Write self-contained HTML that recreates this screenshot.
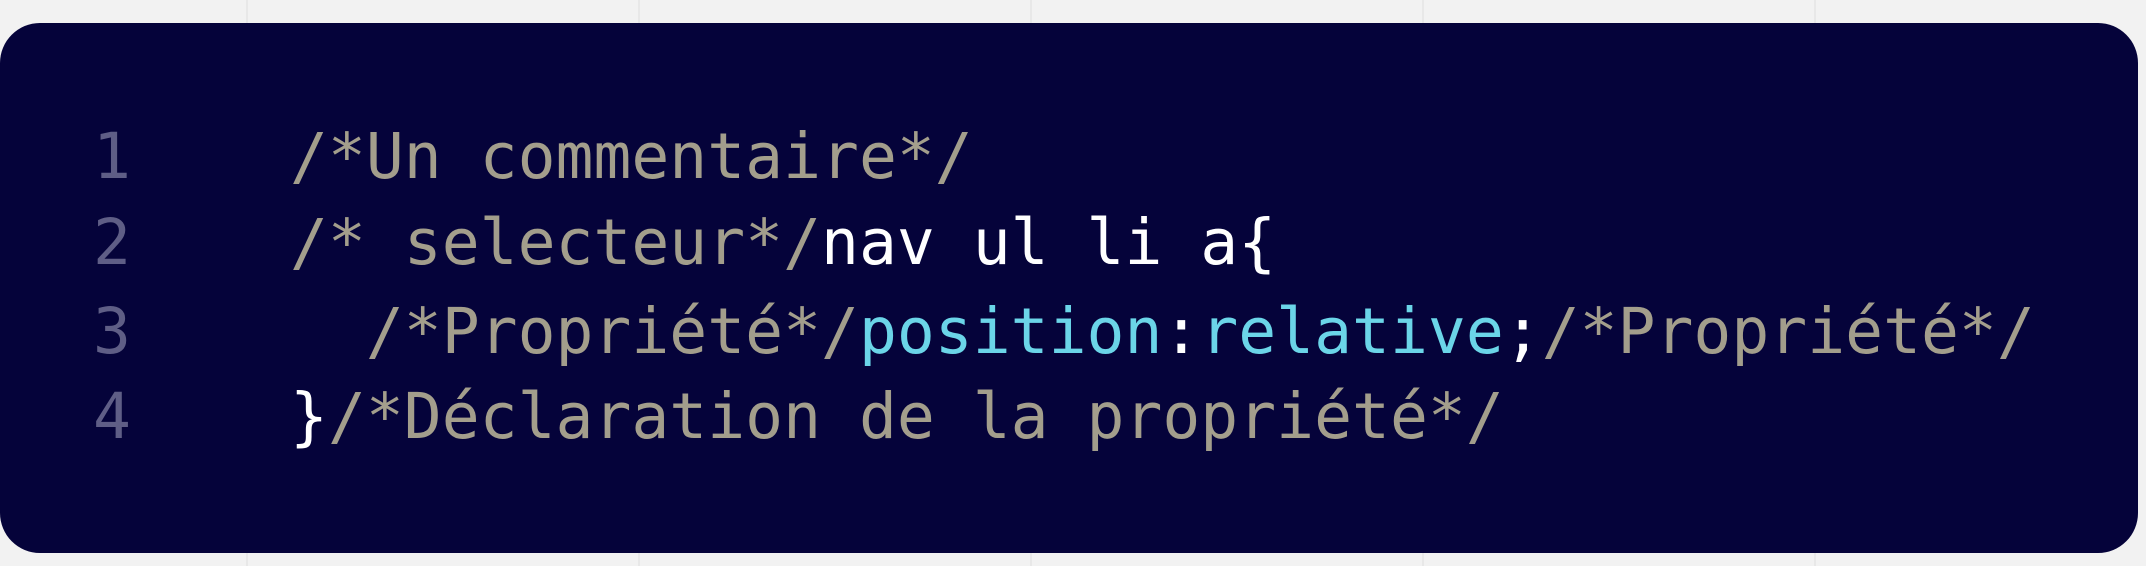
<!DOCTYPE html>
<html><head><meta charset="utf-8"><style>
html,body{margin:0;padding:0;}
body{width:2146px;height:566px;background:#f2f2f2;position:relative;overflow:hidden;
background-image:repeating-linear-gradient(90deg,transparent 0 246px,#e8e8e8 246px 248px,transparent 248px 392px);background-position:0 0;}
.box{position:absolute;left:0;top:23px;width:2138px;height:530px;background:#05033a;border-radius:40px;}
.l{position:absolute;left:0;height:87px;line-height:87px;font-family:"DejaVu Sans Mono",monospace;font-size:63px;white-space:pre;color:#a39e8c;}
.n{position:absolute;left:80px;width:64px;text-align:center;color:#5f5e86;}
.c{position:absolute;left:290px;}
.w{color:#ffffff}.k{color:#6bd5e8}
</style></head><body>
<div class="box"></div>
<div class="l" style="top:113px"><span class="n">1</span><span class="c">/*Un commentaire*/</span></div>
<div class="l" style="top:199px"><span class="n">2</span><span class="c">/* selecteur*/<span class="w">nav ul li a{</span></span></div>
<div class="l" style="top:288px"><span class="n">3</span><span class="c">  /*Propriété*/<span class="k">position</span><span class="w">:</span><span class="k">relative</span><span class="w">;</span>/*Propriété*/</span></div>
<div class="l" style="top:373px"><span class="n">4</span><span class="c"><span class="w">}</span>/*Déclaration de la propriété*/</span></div>
</body></html>
